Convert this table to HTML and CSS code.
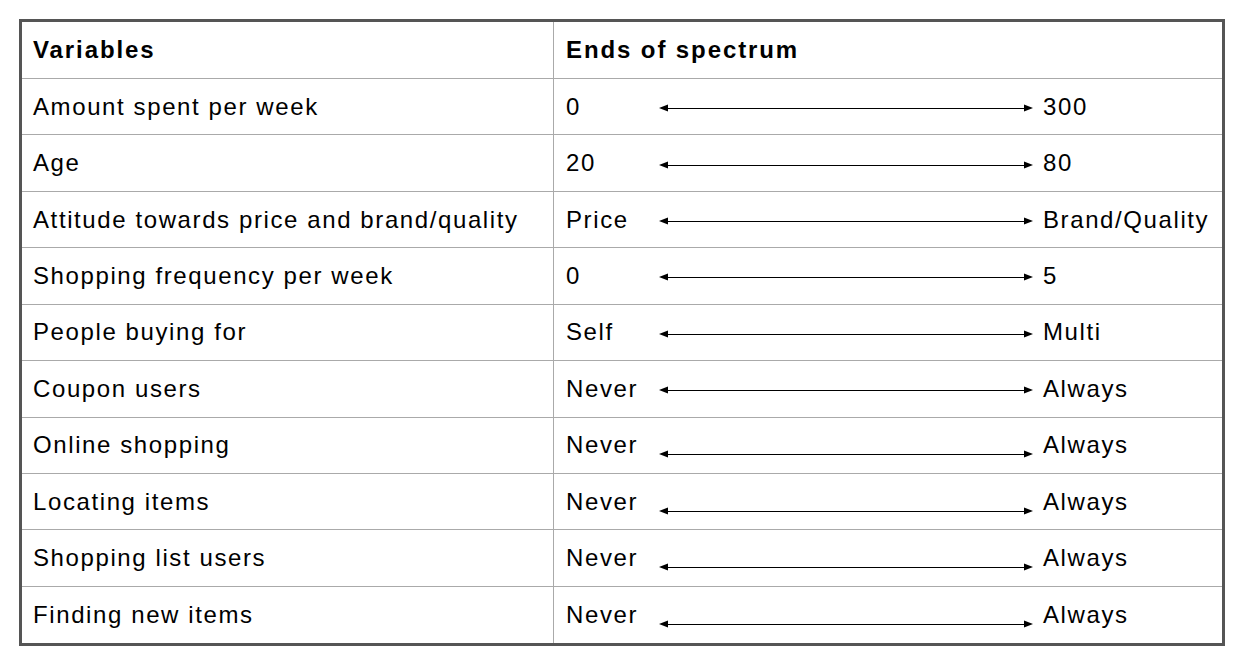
FILE: index.html
```html
<!DOCTYPE html>
<html lang="en">
<head>
<meta charset="utf-8">
<title>Variables and ends of spectrum</title>
<link rel="stylesheet" href="styles.css">
</head>
<body>
<div class="frame">
  <table class="grid">
    <thead>
      <tr><th class="var">Variables</th><th class="ends">Ends of spectrum</th></tr>
    </thead>
    <tbody>
      <tr><td class="var">Amount spent per week</td><td class="ends"><div class="spec"><span class="lo">0</span><svg class="arrow" viewBox="0 0 374 10" width="374" height="10"><line class="shaft" x1="6" y1="5" x2="368" y2="5"/><polygon points="0,5 9,1.5 9,8.5"/><polygon points="374,5 365,1.5 365,8.5"/></svg><span class="hi">300</span></div></td></tr>
      <tr><td class="var">Age</td><td class="ends"><div class="spec"><span class="lo">20</span><svg class="arrow" viewBox="0 0 374 10" width="374" height="10"><line class="shaft" x1="6" y1="5" x2="368" y2="5"/><polygon points="0,5 9,1.5 9,8.5"/><polygon points="374,5 365,1.5 365,8.5"/></svg><span class="hi">80</span></div></td></tr>
      <tr><td class="var">Attitude towards price and brand/quality</td><td class="ends"><div class="spec"><span class="lo">Price</span><svg class="arrow" viewBox="0 0 374 10" width="374" height="10"><line class="shaft" x1="6" y1="5" x2="368" y2="5"/><polygon points="0,5 9,1.5 9,8.5"/><polygon points="374,5 365,1.5 365,8.5"/></svg><span class="hi">Brand/Quality</span></div></td></tr>
      <tr><td class="var">Shopping frequency per week</td><td class="ends"><div class="spec"><span class="lo">0</span><svg class="arrow" viewBox="0 0 374 10" width="374" height="10"><line class="shaft" x1="6" y1="5" x2="368" y2="5"/><polygon points="0,5 9,1.5 9,8.5"/><polygon points="374,5 365,1.5 365,8.5"/></svg><span class="hi">5</span></div></td></tr>
      <tr><td class="var">People buying for</td><td class="ends"><div class="spec"><span class="lo">Self</span><svg class="arrow" viewBox="0 0 374 10" width="374" height="10"><line class="shaft" x1="6" y1="5" x2="368" y2="5"/><polygon points="0,5 9,1.5 9,8.5"/><polygon points="374,5 365,1.5 365,8.5"/></svg><span class="hi">Multi</span></div></td></tr>
      <tr><td class="var">Coupon users</td><td class="ends"><div class="spec"><span class="lo">Never</span><svg class="arrow" viewBox="0 0 374 10" width="374" height="10"><line class="shaft" x1="6" y1="5" x2="368" y2="5"/><polygon points="0,5 9,1.5 9,8.5"/><polygon points="374,5 365,1.5 365,8.5"/></svg><span class="hi">Always</span></div></td></tr>
      <tr><td class="var">Online shopping</td><td class="ends"><div class="spec"><span class="lo">Never</span><svg class="arrow low" viewBox="0 0 374 10" width="374" height="10"><line class="shaft" x1="6" y1="5" x2="368" y2="5"/><polygon points="0,5 9,1.5 9,8.5"/><polygon points="374,5 365,1.5 365,8.5"/></svg><span class="hi">Always</span></div></td></tr>
      <tr><td class="var">Locating items</td><td class="ends"><div class="spec"><span class="lo">Never</span><svg class="arrow low" viewBox="0 0 374 10" width="374" height="10"><line class="shaft" x1="6" y1="5" x2="368" y2="5"/><polygon points="0,5 9,1.5 9,8.5"/><polygon points="374,5 365,1.5 365,8.5"/></svg><span class="hi">Always</span></div></td></tr>
      <tr><td class="var">Shopping list users</td><td class="ends"><div class="spec"><span class="lo">Never</span><svg class="arrow low" viewBox="0 0 374 10" width="374" height="10"><line class="shaft" x1="6" y1="5" x2="368" y2="5"/><polygon points="0,5 9,1.5 9,8.5"/><polygon points="374,5 365,1.5 365,8.5"/></svg><span class="hi">Always</span></div></td></tr>
      <tr><td class="var">Finding new items</td><td class="ends"><div class="spec"><span class="lo">Never</span><svg class="arrow low" viewBox="0 0 374 10" width="374" height="10"><line class="shaft" x1="6" y1="5" x2="368" y2="5"/><polygon points="0,5 9,1.5 9,8.5"/><polygon points="374,5 365,1.5 365,8.5"/></svg><span class="hi">Always</span></div></td></tr>
    </tbody>
  </table>
</div>
</body>
</html>
```

FILE: styles.css
```css
html, body {
  margin: 0;
  padding: 0;
  background: #fff;
}

body {
  font-family: "Liberation Sans", Arial, Helvetica, sans-serif;
  color: #000;
}

.frame {
  margin: 19px 0 0 19px;
  width: 1200px;
  height: 621px;
  border: 3px solid #555;
  background: #fff;
  overflow: hidden;
}

.grid {
  width: 1200px;
  border-collapse: collapse;
  table-layout: fixed;
}

.grid tr {
  height: 56.45px;
}

.grid th,
.grid td {
  padding: 0;
  font-size: 24px;
  letter-spacing: 1.6px;
  line-height: 28px;
  text-align: left;
  vertical-align: middle;
  border-top: 1px solid #aaa;
  white-space: nowrap;
}

.grid thead th {
  border-top: none;
  font-weight: bold;
  letter-spacing: 1.9px;
}

.grid .var {
  width: 520px;
  padding-left: 11px;
  border-right: 1px solid #aaa;
}

.grid .ends {
  padding-left: 12px;
}

.spec {
  display: flex;
  align-items: center;
}

.lo {
  width: 93px;
  flex: none;
}

.arrow {
  flex: none;
  display: block;
  margin-top: 3px;
  fill: #000;
}

.arrow .shaft {
  stroke: #000;
  stroke-width: 1;
  shape-rendering: crispEdges;
}

.arrow.low {
  margin-top: 18px;
}

.hi {
  margin-left: 10px;
}
```
